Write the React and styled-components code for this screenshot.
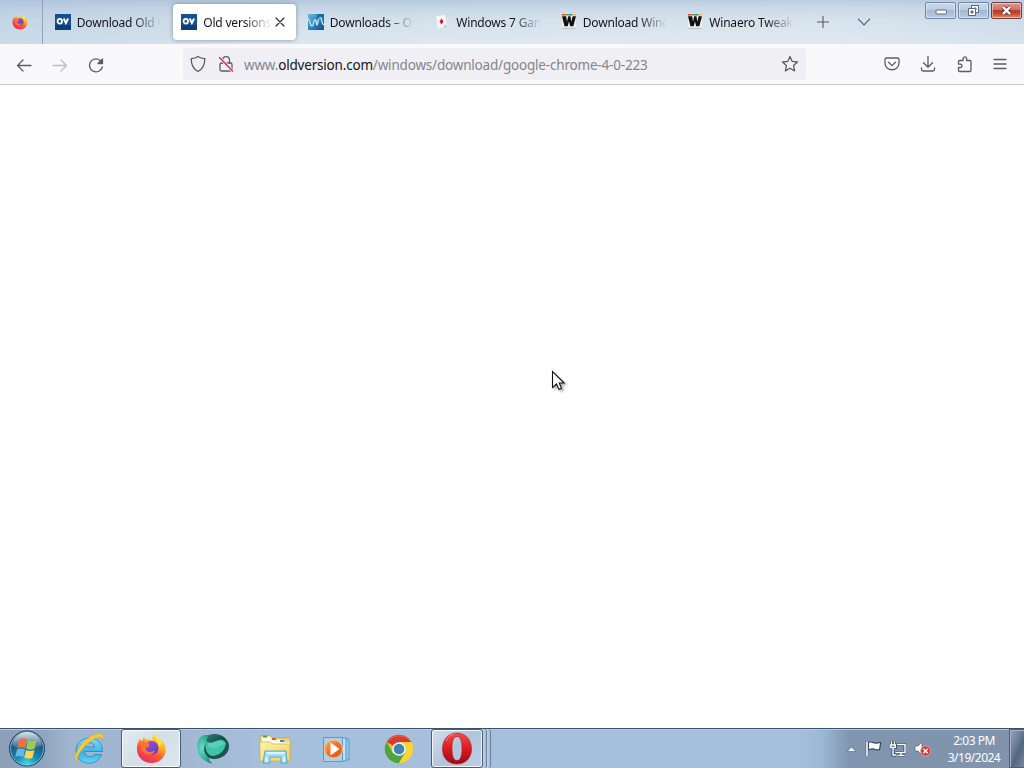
import React from "react";
import styled, { createGlobalStyle, css } from "styled-components";

const Global = createGlobalStyle`
  *, *::before, *::after { box-sizing: border-box; }
  body { margin: 0; background: #fff; overflow: hidden; font-family: "Noto Sans", "Open Sans", sans-serif; }
  svg { display: block; flex: none; }
`;

const Desktop = styled.div`
  width: 1024px;
  height: 768px;
  display: flex;
  flex-direction: column;
  position: relative;
  cursor: default;
`;

const TabStrip = styled.header`
  height: 44px;
  display: flex;
  align-items: stretch;
  background:
    linear-gradient(90deg, rgba(160, 188, 216, 0.3), rgba(160, 188, 216, 0) 30%, rgba(255, 255, 255, 0.1) 80%, rgba(190, 208, 228, 0.2)),
    linear-gradient(#b4c8de 0, #c6d6e6 8px, #d3e0eb 20px, #dce7f0 44px);
`;

const PinnedTab = styled.div`
  width: 43px;
  border-right: 1px solid #93a4b8;
  padding: 14px 0 0 12px;
`;

const Tabs = styled.div`
  display: flex;
  padding-left: 1.8px;
`;

const Tab = styled.div`
  width: 122.5px;
  height: 36px;
  margin: 4px 2px;
  padding: 0 8px;
  display: flex;
  align-items: center;
  border-radius: 4px;
  color: #15141a;
  ${(p) => p.$active && css`
    background: #fff;
    box-shadow: 0 0 4px rgba(70, 85, 110, 0.55);
  `}
`;

const TabTitle = styled.span`
  flex: 1;
  margin-left: 6px;
  padding-top: 2px;
  overflow: hidden;
  white-space: nowrap;
  font-size: 12px;
  line-height: 18px;
  letter-spacing: -0.2px;
  mask-image: linear-gradient(to left, transparent 0, #000 28px);
`;

const StripButtons = styled.div`
  display: flex;
  align-items: center;
  gap: 25px;
  margin-left: 11px;
`;

const WindowControls = styled.div`
  display: flex;
  gap: 2px;
  margin-left: auto;
  padding: 2px 2px 0 0;
`;

const Control = styled.div`
  width: 31px;
  height: 17px;
  display: grid;
  place-items: center;
  border: 1px solid ${(p) => (p.$close ? "#713b40" : "#7086a5")};
  border-radius: 2px;
  box-shadow: inset 0 0 0 1px rgba(255, 255, 255, 0.45);
  background: ${(p) => p.$close
    ? "linear-gradient(#dc9a8c 0, #cf7260 45%, #b93725 46%, #c64731 70%, #dc8f69 100%)"
    : "linear-gradient(#cad7e8 0, #bdcce1 45%, #a3b7d1 46%, #b8cae1 100%)"};
`;

const NavBar = styled.nav`
  height: 41px;
  display: flex;
  align-items: center;
  padding: 0 14px;
  background: #f9f9fb;
  border-bottom: 1px solid #cdcdd1;
`;

const NavButtons = styled.div`
  display: flex;
  gap: 16px;
  padding-top: 1px;
`;

const UrlBar = styled.div`
  width: 623px;
  height: 32px;
  margin-left: 77px;
  padding: 0 6px 0 5px;
  display: flex;
  align-items: center;
  background: #f0f0f4;
  border-radius: 3px;
`;

const SiteIcons = styled.div`
  display: flex;
  gap: 8px;
`;

const Url = styled.span`
  flex: 1;
  margin-left: 8px;
  padding-top: 2px;
  font-size: 13.5px;
  line-height: 20px;
  letter-spacing: -0.19px;
  white-space: nowrap;
  color: #85858c;
  b { font-weight: 400; color: #15141a; }
`;

const Actions = styled.div`
  display: flex;
  gap: 16px;
  margin-left: auto;
`;

const Page = styled.main`
  flex: 1;
  background: #fff;
`;

const Pointer = styled.svg`
  position: absolute;
  left: 551px;
  top: 370px;
  filter: drop-shadow(2px 2px 1px rgba(0, 0, 0, 0.3));
`;

const Taskbar = styled.footer`
  height: 40px;
  display: flex;
  border-top: 1px solid #38516f;
  box-shadow: inset 0 1px 0 #b9cde1;
  background: linear-gradient(90deg, #8d9fb8 0, #91a5be 45px, #a0b5cf 70px, #a2b7d2 185px, #a6bfdc 260px, #a6bfdc 800px, #9db9d8 820px, #8095b0 850px, #8093ab 1024px);
`;

const StartButton = styled.div`
  width: 59px;
  padding: 1px 0 0 8px;
`;

const TaskItem = styled.div`
  width: ${(p) => p.$width || 60}px;
  height: 39px;
  margin-right: 2px;
  display: grid;
  place-items: center;
  border: 1px solid transparent;
  border-radius: 3px;
  ${(p) => p.$open && css`
    border-color: #465c78;
    box-shadow: inset 0 0 0 1px rgba(255, 255, 255, 0.8);
    background: ${p.$focused
      ? "linear-gradient(135deg, #e4ebf2, #d2dee9 50%, #dfe8f0)"
      : "linear-gradient(135deg, #d3deeb, #b0c4dc 50%, #bccfe4)"};
  `}
`;

const StackEdge = styled.div`
  width: 4px;
  height: 39px;
  margin-left: ${(p) => p.$offset || 0}px;
  border-right: 1px solid #6b829f;
  background: linear-gradient(90deg, #bed0e4, #a8bdd6);
  border-radius: 0 3px 3px 0;
`;

const Tray = styled.div`
  display: flex;
  align-items: center;
  margin-left: auto;
`;

const TrayIcons = styled.div`
  display: flex;
  align-items: center;
  gap: 8px;
`;

const Clock = styled.div`
  width: 70px;
  margin-left: 7px;
  text-align: center;
  color: #fff;
  font-size: 12px;
  line-height: 17px;
  letter-spacing: -0.5px;
  padding-top: 1px;
`;

const ShowDesktop = styled.div`
  width: 15px;
  height: 39px;
  border: 1px solid #4c5f79;
  border-right: 0;
  box-shadow: inset 1px 1px 0 #a6b4c6;
  background: linear-gradient(115deg, #94a4b9, #6c7e97 40%, #53657f 60%, #7588a1);
`;

const Line = ({ children, size = 20, color = "#5b5b66", w = 1.3, ...rest }) => (
  <svg width={size} height={size} viewBox="0 0 20 20" fill="none" stroke={color} strokeWidth={w} strokeLinecap="round" strokeLinejoin="round" {...rest}>
    {children}
  </svg>
);

const Firefox = ({ size, id }) => (
  <svg width={size} height={size} viewBox="0 0 32 32">
    <defs>
      <linearGradient id={`${id}-a`} x1="0.8" y1="0" x2="0.25" y2="1">
        <stop offset="0" stopColor="#fff04a" />
        <stop offset="0.35" stopColor="#ffae23" />
        <stop offset="0.62" stopColor="#ff5638" />
        <stop offset="1" stopColor="#e52765" />
      </linearGradient>
      <linearGradient id={`${id}-b`} x1="0" y1="0" x2="0.6" y2="1">
        <stop offset="0" stopColor="#a44ae0" />
        <stop offset="1" stopColor="#5a43c5" />
      </linearGradient>
    </defs>
    <path d="M19 1c1 2.500 4 3.700 6 6 3 1 5.500 5 5.700 9.500C31 25 24.500 31 16 31S1 25 1 16.500C1 11 3 8 4 6l1.500 3L8 4l2 3c2-.8 5-.7 7 .5C16.500 5 17.500 2.500 19 1z" fill={`url(#${id}-a)`} />
    <path d="M12 9.500c4-2.500 9-.5 10.500 3 2 5-1 10-6 10S8.500 18 9.500 14.500c1.500 1 3 .6 4.500-.5-.5-1-2-1.500-4-1.500z" fill={`url(#${id}-b)`} />
    <path d="M5 9c2-1 4 0 5 1l4 1c0 1.500-2 2.500-3.500 3-1.500 3 1 6 4.500 5.500 2-.3 3-1.500 4.500-1-1 3-5 5-8.500 3.500C6 20 4 14 5 9z" fill="#ff7138" />
    <path d="M19 1c-1 5 5 7 5 13 3-2 2-6 1-7-2-2.300-5-3.500-6-6z" fill="#ffe44b" />
  </svg>
);

const OvIcon = () => (
  <svg width="16" height="16" viewBox="0 0 16 16">
    <rect width="16" height="16" fill="#17508c" />
    <rect y="11" width="16" height="5" fill="#0c3f78" />
    <ellipse cx="4.800" cy="7.200" rx="2.200" ry="2.400" fill="none" stroke="#fff" strokeWidth="1.800" />
    <path d="M8.700 4.500l2.200 4.600 2.200-4.600" fill="none" stroke="#fff" strokeWidth="1.900" />
  </svg>
);

const WaveIcon = () => (
  <svg width="16" height="16" viewBox="0 0 16 16">
    <defs>
      <linearGradient id="wave" x1="0" y1="0" x2="1" y2="1">
        <stop offset="0" stopColor="#6fb9df" /><stop offset=".5" stopColor="#2f86ba" /><stop offset="1" stopColor="#0f4d86" />
      </linearGradient>
    </defs>
    <rect width="16" height="16" fill="url(#wave)" />
    <path d="M0 5c2 0 2 7 4 7s1-6 3-6 1 5 2 5 1-8 3-8 1 7 4 8" fill="none" stroke="#bfe9fb" strokeWidth="1.300" />
    <path d="M9 0h7v4c-3-2-4-1-7 2z" fill="#176196" fillOpacity=".75" />
  </svg>
);

const CardIcon = () => (
  <svg width="16" height="16" viewBox="0 0 16 16">
    <path d="M2 2l9-1 2 11-9 2z" fill="#faf5f7" />
    <path d="M7.500 4.500l2 3-2 3-2-3z" fill="#d5163b" />
    <path d="M11 10l2 3h-3z" fill="#c5bcc4" />
  </svg>
);

const WinaeroIcon = () => (
  <svg width="16" height="16" viewBox="0 0 16 16">
    <rect x="1" y="1" width="14" height="13" fill="#eef1f1" />
    <path d="M1 .8h3.500" stroke="#e43b2d" strokeWidth="1.500" />
    <path d="M4.500 .8H8" stroke="#4aa843" strokeWidth="1.500" />
    <path d="M8 .8h3.500" stroke="#3479ce" strokeWidth="1.500" />
    <path d="M11.500 .8H15" stroke="#f0ba24" strokeWidth="1.500" />
    <path d="M1 2.200h4.200l.8 5.500 1.200-5.500h2.200l1 5.500 1.200-5.500H15L12.300 12.300H9.200L8 7.600l-1.300 4.700H3.500z" fill="#111" />
    <path d="M1 14.300h14" stroke="#b9bfc3" />
  </svg>
);

const StartOrb = () => (
  <svg width="38" height="37" viewBox="0 0 38 37">
    <defs>
      <radialGradient id="orb" cx=".5" cy=".95" r=".95">
        <stop offset="0" stopColor="#42dbef" /><stop offset=".35" stopColor="#1786b1" /><stop offset=".7" stopColor="#23577e" /><stop offset="1" stopColor="#60849d" />
      </radialGradient>
      <linearGradient id="orb-shine" x1="0" y1="0" x2="0" y2="1">
        <stop offset="0" stopColor="#fff" stopOpacity=".75" /><stop offset="1" stopColor="#fff" stopOpacity=".08" />
      </linearGradient>
    </defs>
    <circle cx="19" cy="18.500" r="17.500" fill="url(#orb)" stroke="#213e5d" />
    <circle cx="19" cy="18.500" r="16.500" fill="none" stroke="#9ad4e5" strokeOpacity=".65" />
    <path d="M4 15C7 4 15 2 19 2s12 2 15 13c-8 5-22 5-30 0z" fill="url(#orb-shine)" />
    <g transform="translate(-1.600 -1.500) scale(1.080)">
      <path d="M12 10c2.500-1.500 5-1.400 7 .2l-1.500 8c-2.500-1.500-5-1.300-7.200-.2z" fill="#ee713d" />
      <path d="M20 10.800c2.500 1.500 5 1.300 8-.5l-1.800 8.200c-2.800 1.500-5.300 1.400-7.700.2z" fill="#9dcb52" />
      <path d="M9.900 19.300c2.300-1.200 4.800-1.200 7.300.2l-1.600 7c-2.500-1.300-4.700-1.300-7.400-.1z" fill="#66b7e6" />
      <path d="M18.200 20c2.500 1.200 5 1.200 7.700-.2L24.200 27c-2.700 1.300-5.100 1.200-7.700-.1z" fill="#ffd34b" />
    </g>
  </svg>
);

const Explorer = () => (
  <svg width="32" height="32" viewBox="0 0 32 32">
    <defs>
      <linearGradient id="ie" x1="0" y1="0" x2="0" y2="1">
        <stop offset="0" stopColor="#7fddfa" /><stop offset=".6" stopColor="#36b0e8" /><stop offset="1" stopColor="#69d6f5" />
      </linearGradient>
    </defs>
    <path d="M29.500 18.500H11.500c.5 6 8 6.500 10 3h7C24 35 3 32 3 17.500 3 1.500 30 0 29.500 18.500zM11.800 14h9.700c-.5-6-9.200-5.500-9.700 0z" fill="url(#ie)" stroke="#2686bb" strokeWidth=".8" fillRule="evenodd" />
    <path d="M5 30C-1 28 3 17 10 9.500 17 2 27-1.500 30 2c1 1 .8 3 0 5-.3-4-6-4-13.500 2C8 16 2 25 5 30z" fill="#f7ca3d" stroke="#d4a62b" strokeWidth=".5" />
  </svg>
);

const GreenOrb = () => (
  <svg width="34" height="34" viewBox="0 0 34 34">
    <defs>
      <radialGradient id="green" cx=".3" cy=".45" r=".75">
        <stop offset="0" stopColor="#6bdcc2" /><stop offset=".6" stopColor="#2baf94" /><stop offset="1" stopColor="#1a766b" />
      </radialGradient>
      <linearGradient id="green-back" x1="0" y1="0" x2="1" y2="1">
        <stop offset="0" stopColor="#3c837a" /><stop offset=".5" stopColor="#14504b" /><stop offset="1" stopColor="#1d5b54" />
      </linearGradient>
    </defs>
    <ellipse cx="18.500" cy="14.500" rx="14.500" ry="12.500" fill="url(#green-back)" />
    <path d="M8 3C2 5 0 12 2 19c1 6 7 11 15 13-3-2-4-4-4-6-5-5-6-9-4-13 2-5 2-7 4-10z" fill="url(#green)" />
    <path d="M10 9c4 4 8 0 13-1 3-1 5 0 7 3-1 8-7 13-14 13-5-1-8-8-6-15z" fill="#3fc4a5" />
    <path d="M12 10c4 3 8-1 12-1l5 2c-5 3-11 8-17 3z" fill="#7fe6cf" fillOpacity=".4" />
  </svg>
);

const Folder = () => (
  <svg width="34" height="32" viewBox="0 0 34 32">
    <defs>
      <linearGradient id="folder" x1="0" y1="0" x2="1" y2="1">
        <stop offset="0" stopColor="#fff4a7" /><stop offset="1" stopColor="#ecd06b" />
      </linearGradient>
    </defs>
    <path d="M2 3h11l2 2h17v23H2z" fill="#ecd57b" stroke="#c5aa55" strokeWidth=".8" />
    <path d="M4 3.500h8l2 3h8l2 3h8v4H4z" fill="#fffbe0" />
    <rect x="5" y="2.500" width="4" height="2" fill="#39a849" />
    <rect x="14" y="5" width="4" height="2" fill="#d45f41" />
    <rect x="22" y="7" width="4" height="2" fill="#4384cf" />
    <path d="M2 9h10l3 2h17v17H2z" fill="url(#folder)" stroke="#d4b65a" strokeWidth=".8" />
    <path d="M7 18h21l1 12h-6v-6H12v6H5z" fill="#a6dcf3" stroke="#4fa0cb" strokeWidth=".9" />
    <path d="M8.500 20h18M8.500 29v-5M26 29v-5" stroke="#effbff" strokeWidth="1.500" />
  </svg>
);

const MediaPlayer = () => (
  <svg width="32" height="32" viewBox="0 0 32 32">
    <defs><linearGradient id="media" x1="0" y1="0" x2="1" y2="1"><stop offset="0" stopColor="#ffaf5b" /><stop offset=".55" stopColor="#ef681b" /><stop offset="1" stopColor="#db5510" /></linearGradient></defs>
    <path d="M13 6h15v21H13z" fill="#9bc8e6" stroke="#5b99c6" />
    <path d="M9 5h16v23H9z" fill="#c1e3f3" stroke="#4c94c7" />
    <path d="M2.500 4.500h19v24h-19z" fill="#a9d1eb" stroke="#5b99c6" />
    <circle cx="12.500" cy="16" r="9" fill="url(#media)" stroke="#f9c49a" />
    <path d="M9.500 9.500l9 6.500-9 6.500z" fill="#fff" />
  </svg>
);

const Chrome = () => (
  <svg width="32" height="32" viewBox="0 0 32 32">
    <circle cx="16" cy="16" r="14.200" fill="#e8bd2d" />
    <path d="M16 16L3.700 8.900A14.200 14.200 0 0 1 28.300 9H16z" fill="#d63b2e" />
    <path d="M16 16l-6 4.500L3.700 8.900A14.200 14.200 0 0 0 16 30.200l6-10.700z" fill="#4ba547" />
    <path d="M16 9h12.300A14.200 14.200 0 0 1 16 30.200l6.200-10.500z" fill="#f7d43b" />
    <circle cx="16" cy="16" r="6.800" fill="#eef5f8" />
    <circle cx="16" cy="16" r="5.300" fill="#3d83ba" />
    <path d="M5 8c6-7 17-7 22 0" fill="none" stroke="#e96a58" />
  </svg>
);

const Opera = () => (
  <svg width="32" height="34" viewBox="0 0 32 34">
    <defs><linearGradient id="opera" x1="0" y1="0" x2="0" y2="1"><stop offset="0" stopColor="#f54c48" /><stop offset=".5" stopColor="#dc1b21" /><stop offset="1" stopColor="#9f0810" /></linearGradient></defs>
    <path fillRule="evenodd" d="M16 1C6.500 1 1.500 8.500 1.500 17S6.500 32 16 32s14.500-7 14.500-15S25.500 1 16 1zm0 3.500c4 0 5 6 5 12s-1 12-5 12-5-6-5-12 1-12 5-12z" fill="url(#opera)" stroke="#ad151b" strokeWidth=".6" />
    <path d="M5 9c2-5 5-6 9-7" fill="none" stroke="#ff8982" />
  </svg>
);

const tabs = [
  { title: "Download Old Versions", icon: <OvIcon /> },
  { title: "Old versions of", icon: <OvIcon />, active: true },
  { title: "Downloads – Old", icon: <WaveIcon /> },
  { title: "Windows 7 Games", icon: <CardIcon /> },
  { title: "Download Windows", icon: <WinaeroIcon /> },
  { title: "Winaero Tweaker", icon: <WinaeroIcon /> },
];

export default function App() {
  return (
    <Desktop>
      <Global />
      <TabStrip>
        <PinnedTab><Firefox size={16} id="fx-tab" /></PinnedTab>
        <Tabs>
          {tabs.map((t) => (
            <Tab key={t.title} $active={t.active}>
              {t.icon}
              <TabTitle>{t.title}</TabTitle>
              {t.active && <Line size={16} color="#28272f" w={1.4}><path d="M5 5l10 10M15 5L5 15" /></Line>}
            </Tab>
          ))}
        </Tabs>
        <StripButtons>
          <Line size={16} w={1.4}><path d="M10 3v14M3 10h14" /></Line>
          <Line size={16} w={1.5}><path d="M3 6.500l7 7 7-7" /></Line>
        </StripButtons>
        <WindowControls>
          <Control>
            <svg width="14" height="9" viewBox="0 0 14 9"><rect x="2" y="4" width="10.500" height="4" rx=".7" fill="#fff" stroke="#58677d" /></svg>
          </Control>
          <Control>
            <svg width="13" height="13" viewBox="0 0 13 13" stroke="#58677d"><path d="M4.500 1.500h7v7h-7zM7 4h2v2H7z" fill="#fff" fillRule="evenodd" /><path d="M1.500 4.500h7v7h-7zM4 7h2v2H4z" fill="#fff" fillRule="evenodd" /></svg>
          </Control>
          <Control $close>
            <svg width="13" height="11" viewBox="0 0 13 11" fill="none"><path d="M3 2l7 7M10 2L3 9" stroke="#61434d" strokeWidth="4" /><path d="M3 2l7 7M10 2L3 9" stroke="#fff" strokeWidth="2.400" /></svg>
          </Control>
        </WindowControls>
      </TabStrip>

      <NavBar>
        <NavButtons>
          <Line><path d="M17 10.500H4M9 5l-5.500 5.500L9 16" /></Line>
          <Line color="#bdbdc3"><path d="M3 10.500h13M11 5l5.500 5.500L11 16" /></Line>
          <Line><path d="M16.300 12A6.500 6.500 0 1 1 15 6.200" /><path d="M16.500 4v4.500H12z" fill="#5b5b66" /></Line>
        </NavButtons>
        <UrlBar>
          <SiteIcons>
            <Line><path d="M10 2.500c2 1.500 4.300 2 6.800 2.200 0 6-1.500 10-6.800 12.800C4.700 14.700 3.200 10.700 3.200 4.700 5.700 4.500 8 4 10 2.500z" /></Line>
            <Line>
              <rect x="4" y="9" width="12" height="8" rx="1.500" /><path d="M6.500 9V6c0-4.500 7-4.500 7 0v3" />
              <path d="M3.500 3.500l13 13.500" stroke="#f0f0f4" strokeWidth="3" /><path d="M3.500 3.500l13 13.500" stroke="#d7264c" />
            </Line>
          </SiteIcons>
          <Url>www.<b>oldversion.com</b>/windows/download/google-chrome-4-0-223</Url>
          <Line><path d="M10 2.500l2.200 4.900 5.300.6-3.900 3.600 1 5.300L10 14.300l-4.600 2.600 1-5.300L2.500 8l5.300-.6z" /></Line>
        </UrlBar>
        <Actions>
          <Line><path d="M4.500 4h11c1 0 1.500.5 1.500 1.500V9c0 9-14 9-14 0V5.500C3 4.500 3.500 4 4.500 4z" /><path d="M6.500 8.200l3.500 3.400 3.500-3.400" /></Line>
          <Line><path d="M10 2.500V13M5.500 8.800L10 13.300l4.500-4.500M3.500 14v1.500c0 1 .5 1.500 1.500 1.500h10c1 0 1.500-.5 1.500-1.500V14" /></Line>
          <Line><path d="M5.500 17.500c-.8 0-1-.4-1-1v-3h1.800c2.300 0 2.300-3.300 0-3.300H4.500V8c0-1 .3-1.500 1.200-1.500H9V5c0-2.800 3.600-2.800 3.600 0v1.500h3.200c.8 0 1.200.4 1.200 1.200v8.800c0 .7-.4 1-1.200 1z" /></Line>
          <Line><path d="M4 5.500h12M4 10h12M4 14.500h12" /></Line>
        </Actions>
      </NavBar>

      <Page />

      <Taskbar>
        <StartButton><StartOrb /></StartButton>
        <TaskItem><Explorer /></TaskItem>
        <TaskItem $open $focused><Firefox size={31} id="fx-task" /></TaskItem>
        <TaskItem><GreenOrb /></TaskItem>
        <TaskItem><Folder /></TaskItem>
        <TaskItem><MediaPlayer /></TaskItem>
        <TaskItem><Chrome /></TaskItem>
        <TaskItem $open $width={52}><Opera /></TaskItem>
        <StackEdge $offset={-2} />
        <StackEdge />
        <Tray>
          <TrayIcons>
            <svg width="11" height="16" viewBox="0 0 11 16"><path d="M1 10.500l4.500-4.500 4.500 4.500z" fill="#eef6ff" stroke="#4c627e" strokeWidth=".6" /></svg>
            <svg width="17" height="18" viewBox="0 0 17 18"><path d="M2 2v14M4 3c3-1.500 4 1 7 .8 1.800 0 2.700-.7 4-.5L14 9c-3 1-4-.8-6-.8-1.500 0-2.500.5-4 .8z" fill="none" stroke="#334861" strokeWidth="2.400" /><path d="M2 2v14" stroke="#fff" strokeWidth="1.600" /><path d="M4 3c3-1.500 4 1 7 .8 1.800 0 2.700-.7 4-.5L14 9c-3 1-4-.8-6-.8-1.500 0-2.500.5-4 .8z" fill="#fff" /></svg>
            <svg width="16" height="18" viewBox="0 0 16 18" fill="none"><path d="M7 4.500h8v8H5.500M8 15.500h6M11 12.500v3M1.500 1.500v3M4.500 1.500v3M.8 5h4.500v2.500H.8zM3 8v7h3" stroke="#2e4665" strokeWidth="3" /><path d="M7 4.500h8v8H5.500M8 15.500h6M11 12.500v3M1.500 1.500v3M4.500 1.500v3M.8 5h4.500v2.500H.8zM3 8v7h3" stroke="#fff" strokeWidth="1.400" /></svg>
            <svg width="18" height="18" viewBox="0 0 18 18"><path d="M1 6h3l4-4v13l-4-4H1z" fill="#fff" stroke="#49617d" strokeWidth=".7" /><circle cx="11.500" cy="11" r="5" fill="#d7373b" stroke="#f8b0ad" strokeWidth=".7" /><path d="M9.300 8.800l4.400 4.400M13.700 8.800l-4.400 4.400" stroke="#fff" strokeWidth="1.400" /></svg>
          </TrayIcons>
          <Clock>2:03 PM<br />3/19/2024</Clock>
          <ShowDesktop />
        </Tray>
      </Taskbar>
      <Pointer width="15" height="22" viewBox="0 0 15 22"><path d="M1.500 1.500v16l4-3.500 2.500 5.500 2.600-1.200L8.200 13h5z" fill="#fff" stroke="#111" strokeWidth="1.100" /></Pointer>
    </Desktop>
  );
}
